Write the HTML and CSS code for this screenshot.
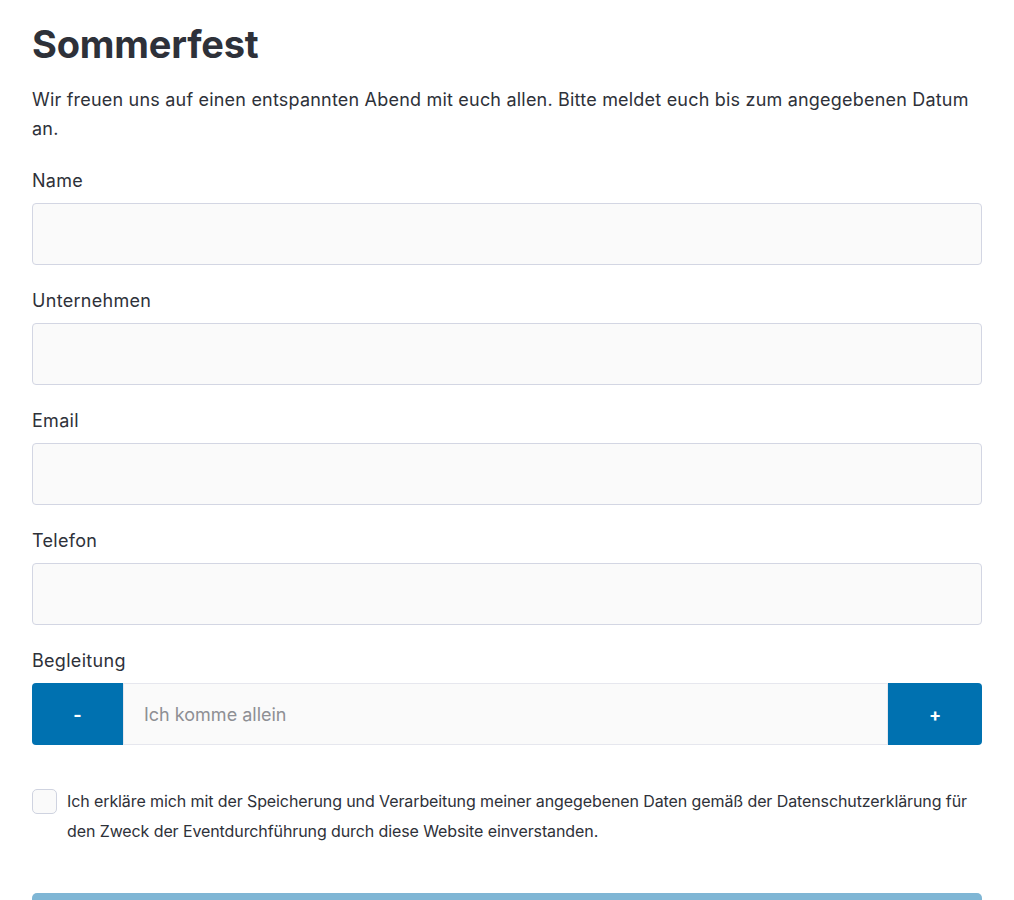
FILE: index.html
```html
<!DOCTYPE html>
<html lang="de">
<head>
    <meta charset="UTF-8">
    <meta name="viewport" content="width=device-width, initial-scale=1.0">
    <title>Sommerfest</title>
    <link rel="stylesheet" href="styles.css">
</head>
<body>
    <main class="event">
        <h1>Sommerfest</h1>
        <p class="intro">Wir freuen uns auf einen entspannten Abend mit euch allen. Bitte meldet euch bis zum angegebenen Datum an.</p>

        <form class="signup">
            <div class="field">
                <label for="name">Name</label>
                <input type="text" id="name" name="name">
            </div>
            <div class="field">
                <label for="company">Unternehmen</label>
                <input type="text" id="company" name="company">
            </div>
            <div class="field">
                <label for="email">Email</label>
                <input type="email" id="email" name="email">
            </div>
            <div class="field">
                <label for="phone">Telefon</label>
                <input type="tel" id="phone" name="phone">
            </div>
            <div class="field">
                <label for="guests">Begleitung</label>
                <div class="stepper">
                    <button type="button" class="step step-minus">-</button>
                    <input type="text" id="guests" name="guests" placeholder="Ich komme allein" readonly>
                    <button type="button" class="step step-plus">+</button>
                </div>
            </div>

            <label class="consent">
                <input type="checkbox" name="consent">
                <span>Ich erkläre mich mit der Speicherung und Verarbeitung meiner angegebenen Daten gemäß der Datenschutzerklärung für den Zweck der Eventdurchführung durch diese Website einverstanden.</span>
            </label>

            <button type="submit" class="submit" disabled>Anmelden</button>
        </form>
    </main>
</body>
</html>
```

FILE: styles.css
```css
body {
    margin: 0;
    padding: 0 32px;
    font-family: Inter, "Noto Sans", sans-serif;
    color: #2e3139;
    background-color: #fff;
}

h1 {
    margin: 21px 0 0;
    font-size: 38px;
    font-weight: 700;
    line-height: 46px;
    letter-spacing: -0.2px;
}

.intro {
    margin: 18px 0 0;
    font-size: 18px;
    line-height: 29px;
    letter-spacing: 0.2px;
}

.signup {
    margin-top: 25px;
}

.field {
    margin-bottom: 23px;
}

.field label {
    display: block;
    font-size: 18px;
    line-height: 26px;
    letter-spacing: 0.3px;
    margin-bottom: 9px;
}

.field input {
    display: block;
    width: 100%;
    height: 62px;
    box-sizing: border-box;
    padding: 0 20px;
    border: 1px solid #d3d6e3;
    border-radius: 4px;
    background-color: #fafafa;
    font-family: inherit;
    font-size: 18px;
    color: #2e3139;
}

.stepper {
    display: flex;
    height: 62px;
}

.stepper input {
    flex: 1;
    height: 62px;
    border: 1px solid #e6e7ee;
    border-radius: 0;
    padding: 0 20px;
}

.stepper input::placeholder {
    color: #8e8f94;
}

.step {
    border: none;
    background-color: #0071b0;
    color: #fff;
    font-family: inherit;
    font-size: 18px;
    font-weight: 700;
    cursor: pointer;
}

.step-minus {
    width: 91px;
    border-radius: 4px 0 0 4px;
}

.step-plus {
    width: 94px;
    border-radius: 0 4px 4px 0;
}

.consent {
    display: flex;
    align-items: flex-start;
    gap: 10px;
    margin-top: 41px;
    font-size: 16px;
    line-height: 30px;
    letter-spacing: -0.1px;
}

.consent input {
    flex: none;
    appearance: none;
    width: 25px;
    height: 25px;
    margin: 3px 0 0;
    border: 1px solid #cfd3e0;
    border-radius: 5px;
    background-color: #fafafa;
}

.submit {
    display: block;
    width: 100%;
    height: 60px;
    margin-top: 47px;
    border: none;
    border-radius: 5px;
    background-color: #7fb6d5;
    color: #fff;
    font-family: inherit;
    font-size: 18px;
}
```
